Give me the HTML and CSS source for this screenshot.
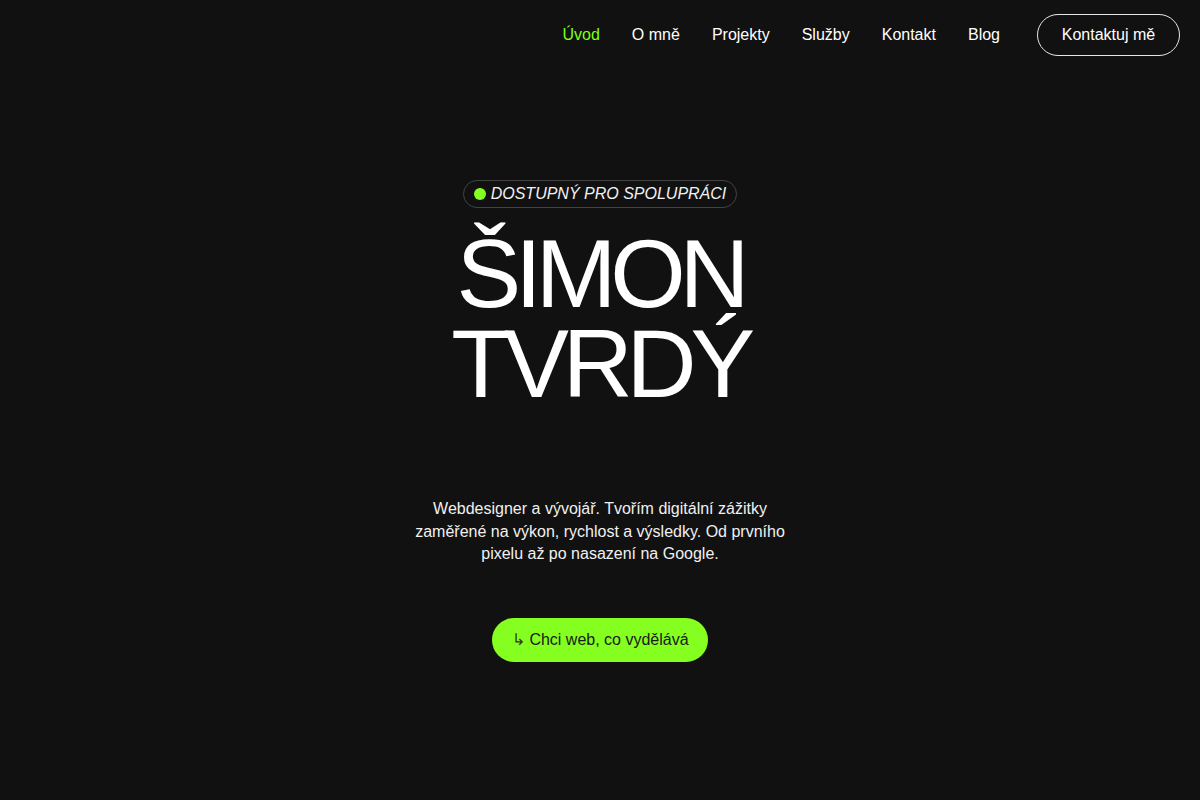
FILE: index.html
```html
<!DOCTYPE html>
<html lang="cs">
<head>
<meta charset="utf-8">
<title>Šimon Tvrdý</title>
<link rel="stylesheet" href="styles.css">
</head>
<body>
<header class="header">
  <nav class="nav">
    <a class="nav-link active" href="#">Úvod</a>
    <a class="nav-link" href="#">O mně</a>
    <a class="nav-link" href="#">Projekty</a>
    <a class="nav-link" href="#">Služby</a>
    <a class="nav-link" href="#">Kontakt</a>
    <a class="nav-link" href="#">Blog</a>
  </nav>
  <a class="nav-cta" href="#">Kontaktuj mě</a>
</header>
<main class="hero">
  <div class="badge"><span class="dot"></span>DOSTUPNÝ PRO SPOLUPRÁCI</div>
  <h1 class="title">ŠIMON<br>TVRDÝ</h1>
  <p class="lead">Webdesigner a vývojář. Tvořím digitální zážitky zaměřené na výkon, rychlost a výsledky. Od prvního pixelu až po nasazení na Google.</p>
  <a class="cta" href="#"><span class="arrow">↳</span>Chci web, co vydělává</a>
</main>
</body>
</html>
```
FILE: styles.css
```css
* { box-sizing: border-box; }
html, body { margin: 0; padding: 0; }
body {
  background: #111111;
  color: #ffffff;
  font-family: "Liberation Sans", Arial, sans-serif;
  height: 800px;
  overflow: hidden;
}
a { text-decoration: none; color: inherit; }

.header {
  display: flex;
  justify-content: flex-end;
  align-items: center;
  padding: 14px 20px 0 0;
  height: 56px;
}
.nav {
  display: flex;
  gap: 32px;
  margin-right: 37px;
}
.nav-link {
  font-size: 16px;
  color: #ffffff;
}
.nav-link.active { color: #7fff1a; }
.nav-cta {
  display: flex;
  align-items: center;
  justify-content: center;
  width: 143px;
  height: 42px;
  border: 1px solid #e6e6e6;
  border-radius: 21px;
  font-size: 16px;
}

.hero {
  display: flex;
  flex-direction: column;
  align-items: center;
  padding-top: 124px;
}
.badge {
  display: flex;
  align-items: center;
  gap: 5px;
  height: 28px;
  padding: 0 10px;
  border: 1px solid #444444;
  border-radius: 14px;
  font-style: italic;
  font-size: 16px;
  color: #f2f2f2;
}
.dot {
  width: 12px;
  height: 12px;
  border-radius: 50%;
  background: #84ff1f;
}
.title {
  margin: 21px 0 0;
  font-size: 97px;
  line-height: 90px;
  font-weight: 400;
  letter-spacing: -6.2px;
  text-align: center;
}
.lead {
  margin: 89px 0 0;
  width: 380px;
  text-align: center;
  font-size: 16px;
  line-height: 22.5px;
  color: #f0f0f0;
}
.cta {
  margin-top: 52px;
  display: flex;
  align-items: center;
  gap: 4px;
  height: 44px;
  padding: 0 19px 0 20px;
  background: #84ff1f;
  color: #1a1a1a;
  border-radius: 22px;
  font-size: 16px;
}
.arrow { font-size: 16px; color: #333; }
```
